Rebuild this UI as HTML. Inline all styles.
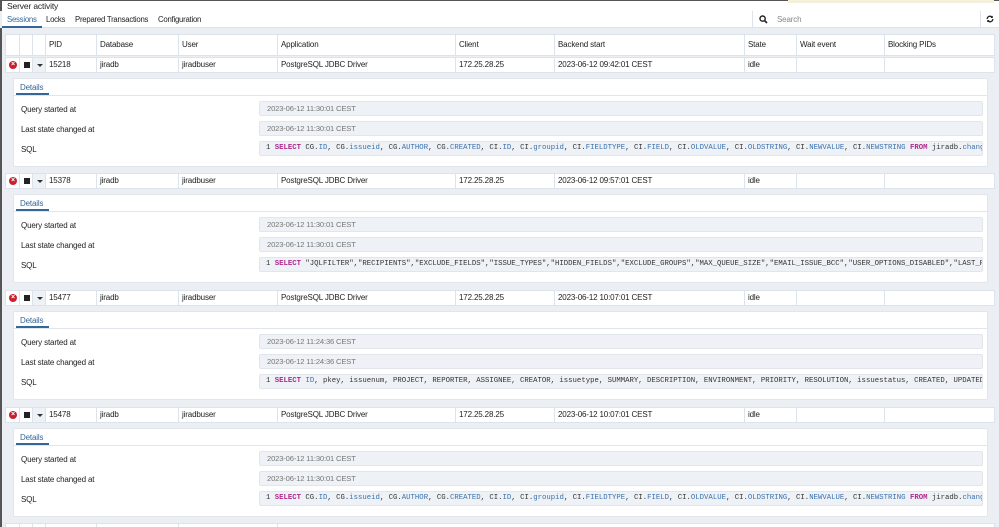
<!DOCTYPE html>
<html style="overflow:hidden;width:999px;height:527px"><head><meta charset="utf-8"><style>
*{box-sizing:border-box;margin:0;padding:0}
body{width:999px;height:527px;overflow:hidden;background:#ebeff4;font-family:"Liberation Sans",sans-serif;font-size:8px;letter-spacing:-0.15px;color:#222;position:relative}
.a{position:absolute}
.top{left:0;top:0;width:999px;height:11px;background:#fff;border-top:1px solid #555;border-left:2px solid #555}
.top span{position:absolute;left:5px;top:0px;font-size:8.5px;color:#222}
.warn{left:788px;top:0;width:206px;height:3px;background:#f5f0dc}
.tabs{left:2px;top:11px;width:997px;height:17px;background:#fff;border-bottom:1px solid #dde3ea}
.tabs span{position:absolute;top:4px;font-size:7.8px;letter-spacing:-0.25px}
.search{left:752px;top:11px;width:229px;height:17px;border-left:1px solid #dde3ea;border-right:1px solid #dde3ea}
.lb{left:0;top:28px;width:2px;height:499px;background:#555}
.hdr,.row{left:5px;width:990px;background:#fff;border:1px solid #dde3ea}
.hdr{top:34px;height:22px}
.row{height:16px}
.c{position:absolute;top:0;height:100%;border-left:1px solid #dde3ea;padding-left:3px;white-space:nowrap}
.hdr .c{line-height:20px;font-weight:normal}
.row .c{line-height:14px}
.panel{left:13px;width:975px;height:89px;background:#fff;border:1px solid #e2e6ec;border-radius:2px}
.dt{position:absolute;left:6px;top:4px;color:#336699;font-size:8px}
.ul{position:absolute;left:2px;top:14px;width:33px;height:2px;background:#336699}
.sep{position:absolute;left:0;top:16px;width:100%;height:1px;background:#e2e6ec}
.lab{position:absolute;left:7px;font-size:8px}
.box{position:absolute;left:245px;width:724px;height:15px;background:#eef1f5;border:1px solid #e2e6ec;border-radius:2px;color:#777;line-height:13px;padding-left:7px;font-size:7.6px}
.code{font-family:"Liberation Mono",monospace;font-size:7.3px;letter-spacing:0;color:#333;padding-left:6px;overflow:hidden;white-space:nowrap}
.k{color:#b0288e;font-weight:bold}.b{color:#3a72b0}
.x{position:absolute;left:3px;top:3px;width:8px;height:8px;border-radius:50%;background:#c9202e;color:#fff;font-size:7px;line-height:8px;text-align:center;font-weight:bold}
.sq{position:absolute;left:4px;top:4px;width:6px;height:6px;background:#222}
.tri{position:absolute;left:4px;top:6px;border-left:3px solid transparent;border-right:3px solid transparent;border-top:3px solid #333}
</style></head><body>
<div class="a top"><span>Server activity</span></div>
<div class="a warn"></div>
<div class="a tabs">
<span style="left:5px;color:#336699">Sessions</span>
<div style="position:absolute;left:0;top:15px;width:40px;height:2px;background:#336699"></div>
<span style="left:44px">Locks</span>
<span style="left:73px">Prepared Transactions</span>
<span style="left:156px">Configuration</span>
</div>
<div class="a search">
<svg style="position:absolute;left:6px;top:4px" width="9" height="9" viewBox="0 0 9 9"><circle cx="3.6" cy="3.6" r="2.6" fill="none" stroke="#222" stroke-width="1.4"/><path d="M5.5 5.5 8 8" stroke="#222" stroke-width="1.6"/></svg>
<span style="position:absolute;left:24px;top:4px;color:#888">Search</span>
</div>
<svg class="a" style="left:986px;top:15px" width="8" height="8" viewBox="0 0 8 8"><path d="M1.2 4a2.8 2.8 0 0 1 5-1.7M6.8 4a2.8 2.8 0 0 1-5 1.7" fill="none" stroke="#222" stroke-width="1.3"/><path d="M6.8 0.6v2.4H4.4zM1.2 7.4V5h2.4z" fill="#222"/></svg>
<div class="a lb"></div>

<div class="a hdr">
<div class="c" style="left:0;border:0;width:13px"></div><div class="c" style="left:13px;width:13px"></div><div class="c" style="left:26px;width:13px"></div>
<div class="c" style="left:39px">PID</div><div class="c" style="left:90px">Database</div><div class="c" style="left:172px">User</div><div class="c" style="left:271px">Application</div><div class="c" style="left:449px">Client</div><div class="c" style="left:548px">Backend start</div><div class="c" style="left:738px">State</div><div class="c" style="left:790px">Wait event</div><div class="c" style="left:878px">Blocking PIDs</div>
</div>

<div class="a row" style="top:57px">
<div class="c" style="left:0;border:0;width:13px"><span class="x">×</span></div><div class="c" style="left:13px;width:13px"><span class="sq"></span></div><div class="c" style="left:26px;width:13px;background:#eef1f5"><span class="tri"></span></div>
<div class="c" style="left:39px">15218</div><div class="c" style="left:90px">jiradb</div><div class="c" style="left:172px">jiradbuser</div><div class="c" style="left:271px">PostgreSQL JDBC Driver</div><div class="c" style="left:449px">172.25.28.25</div><div class="c" style="left:548px">2023-06-12 09:42:01 CEST</div><div class="c" style="left:738px">idle</div><div class="c" style="left:790px"></div><div class="c" style="left:878px"></div>
</div>
<div class="a panel" style="top:78px"><span class="dt">Details</span><div class="ul"></div><div class="sep"></div>
<span class="lab" style="top:26px">Query started at</span><div class="box" style="top:22px">2023-06-12 11:30:01 CEST</div>
<span class="lab" style="top:46px">Last state changed at</span><div class="box" style="top:42px">2023-06-12 11:30:01 CEST</div>
<span class="lab" style="top:66px">SQL</span><div class="box code" style="top:62px">1 <span class="k">SELECT</span> CG.<span class="b">ID</span>, CG.<span class="b">issueid</span>, CG.<span class="b">AUTHOR</span>, CG.<span class="b">CREATED</span>, CI.<span class="b">ID</span>, CI.<span class="b">groupid</span>, CI.<span class="b">FIELDTYPE</span>, CI.<span class="b">FIELD</span>, CI.<span class="b">OLDVALUE</span>, CI.<span class="b">OLDSTRING</span>, CI.<span class="b">NEWVALUE</span>, CI.<span class="b">NEWSTRING</span> <span class="k">FROM</span> jiradb.<span class="b">change;</span></div>
</div>

<div class="a row" style="top:173px">
<div class="c" style="left:0;border:0;width:13px"><span class="x">×</span></div><div class="c" style="left:13px;width:13px"><span class="sq"></span></div><div class="c" style="left:26px;width:13px;background:#eef1f5"><span class="tri"></span></div>
<div class="c" style="left:39px">15378</div><div class="c" style="left:90px">jiradb</div><div class="c" style="left:172px">jiradbuser</div><div class="c" style="left:271px">PostgreSQL JDBC Driver</div><div class="c" style="left:449px">172.25.28.25</div><div class="c" style="left:548px">2023-06-12 09:57:01 CEST</div><div class="c" style="left:738px">idle</div><div class="c" style="left:790px"></div><div class="c" style="left:878px"></div>
</div>
<div class="a panel" style="top:194px"><span class="dt">Details</span><div class="ul"></div><div class="sep"></div>
<span class="lab" style="top:26px">Query started at</span><div class="box" style="top:22px">2023-06-12 11:30:01 CEST</div>
<span class="lab" style="top:46px">Last state changed at</span><div class="box" style="top:42px">2023-06-12 11:30:01 CEST</div>
<span class="lab" style="top:66px">SQL</span><div class="box code" style="top:62px">1 <span class="k">SELECT</span> "JQLFILTER","RECIPIENTS","EXCLUDE_FIELDS","ISSUE_TYPES","HIDDEN_FIELDS","EXCLUDE_GROUPS","MAX_QUEUE_SIZE","EMAIL_ISSUE_BCC","USER_OPTIONS_DISABLED","LAST_PUR</div>
</div>

<div class="a row" style="top:290px">
<div class="c" style="left:0;border:0;width:13px"><span class="x">×</span></div><div class="c" style="left:13px;width:13px"><span class="sq"></span></div><div class="c" style="left:26px;width:13px;background:#eef1f5"><span class="tri"></span></div>
<div class="c" style="left:39px">15477</div><div class="c" style="left:90px">jiradb</div><div class="c" style="left:172px">jiradbuser</div><div class="c" style="left:271px">PostgreSQL JDBC Driver</div><div class="c" style="left:449px">172.25.28.25</div><div class="c" style="left:548px">2023-06-12 10:07:01 CEST</div><div class="c" style="left:738px">idle</div><div class="c" style="left:790px"></div><div class="c" style="left:878px"></div>
</div>
<div class="a panel" style="top:311px"><span class="dt">Details</span><div class="ul"></div><div class="sep"></div>
<span class="lab" style="top:26px">Query started at</span><div class="box" style="top:22px">2023-06-12 11:24:36 CEST</div>
<span class="lab" style="top:46px">Last state changed at</span><div class="box" style="top:42px">2023-06-12 11:24:36 CEST</div>
<span class="lab" style="top:66px">SQL</span><div class="box code" style="top:62px">1 <span class="k">SELECT</span> <span class="b">ID</span>, pkey, issuenum, PROJECT, REPORTER, ASSIGNEE, CREATOR, issuetype, SUMMARY, DESCRIPTION, ENVIRONMENT, PRIORITY, RESOLUTION, issuestatus, CREATED, UPDATED,</div>
</div>

<div class="a row" style="top:407px">
<div class="c" style="left:0;border:0;width:13px"><span class="x">×</span></div><div class="c" style="left:13px;width:13px"><span class="sq"></span></div><div class="c" style="left:26px;width:13px;background:#eef1f5"><span class="tri"></span></div>
<div class="c" style="left:39px">15478</div><div class="c" style="left:90px">jiradb</div><div class="c" style="left:172px">jiradbuser</div><div class="c" style="left:271px">PostgreSQL JDBC Driver</div><div class="c" style="left:449px">172.25.28.25</div><div class="c" style="left:548px">2023-06-12 10:07:01 CEST</div><div class="c" style="left:738px">idle</div><div class="c" style="left:790px"></div><div class="c" style="left:878px"></div>
</div>
<div class="a panel" style="top:428px"><span class="dt">Details</span><div class="ul"></div><div class="sep"></div>
<span class="lab" style="top:26px">Query started at</span><div class="box" style="top:22px">2023-06-12 11:30:01 CEST</div>
<span class="lab" style="top:46px">Last state changed at</span><div class="box" style="top:42px">2023-06-12 11:30:01 CEST</div>
<span class="lab" style="top:66px">SQL</span><div class="box code" style="top:62px">1 <span class="k">SELECT</span> CG.<span class="b">ID</span>, CG.<span class="b">issueid</span>, CG.<span class="b">AUTHOR</span>, CG.<span class="b">CREATED</span>, CI.<span class="b">ID</span>, CI.<span class="b">groupid</span>, CI.<span class="b">FIELDTYPE</span>, CI.<span class="b">FIELD</span>, CI.<span class="b">OLDVALUE</span>, CI.<span class="b">OLDSTRING</span>, CI.<span class="b">NEWVALUE</span>, CI.<span class="b">NEWSTRING</span> <span class="k">FROM</span> jiradb.<span class="b">change;</span></div>
</div>

<div class="a row" style="top:523px;height:4px;border-bottom:0">
<div class="c" style="left:13px"></div><div class="c" style="left:26px"></div><div class="c" style="left:39px"></div><div class="c" style="left:90px"></div><div class="c" style="left:172px"></div><div class="c" style="left:271px"></div>
</div>
</body></html>
